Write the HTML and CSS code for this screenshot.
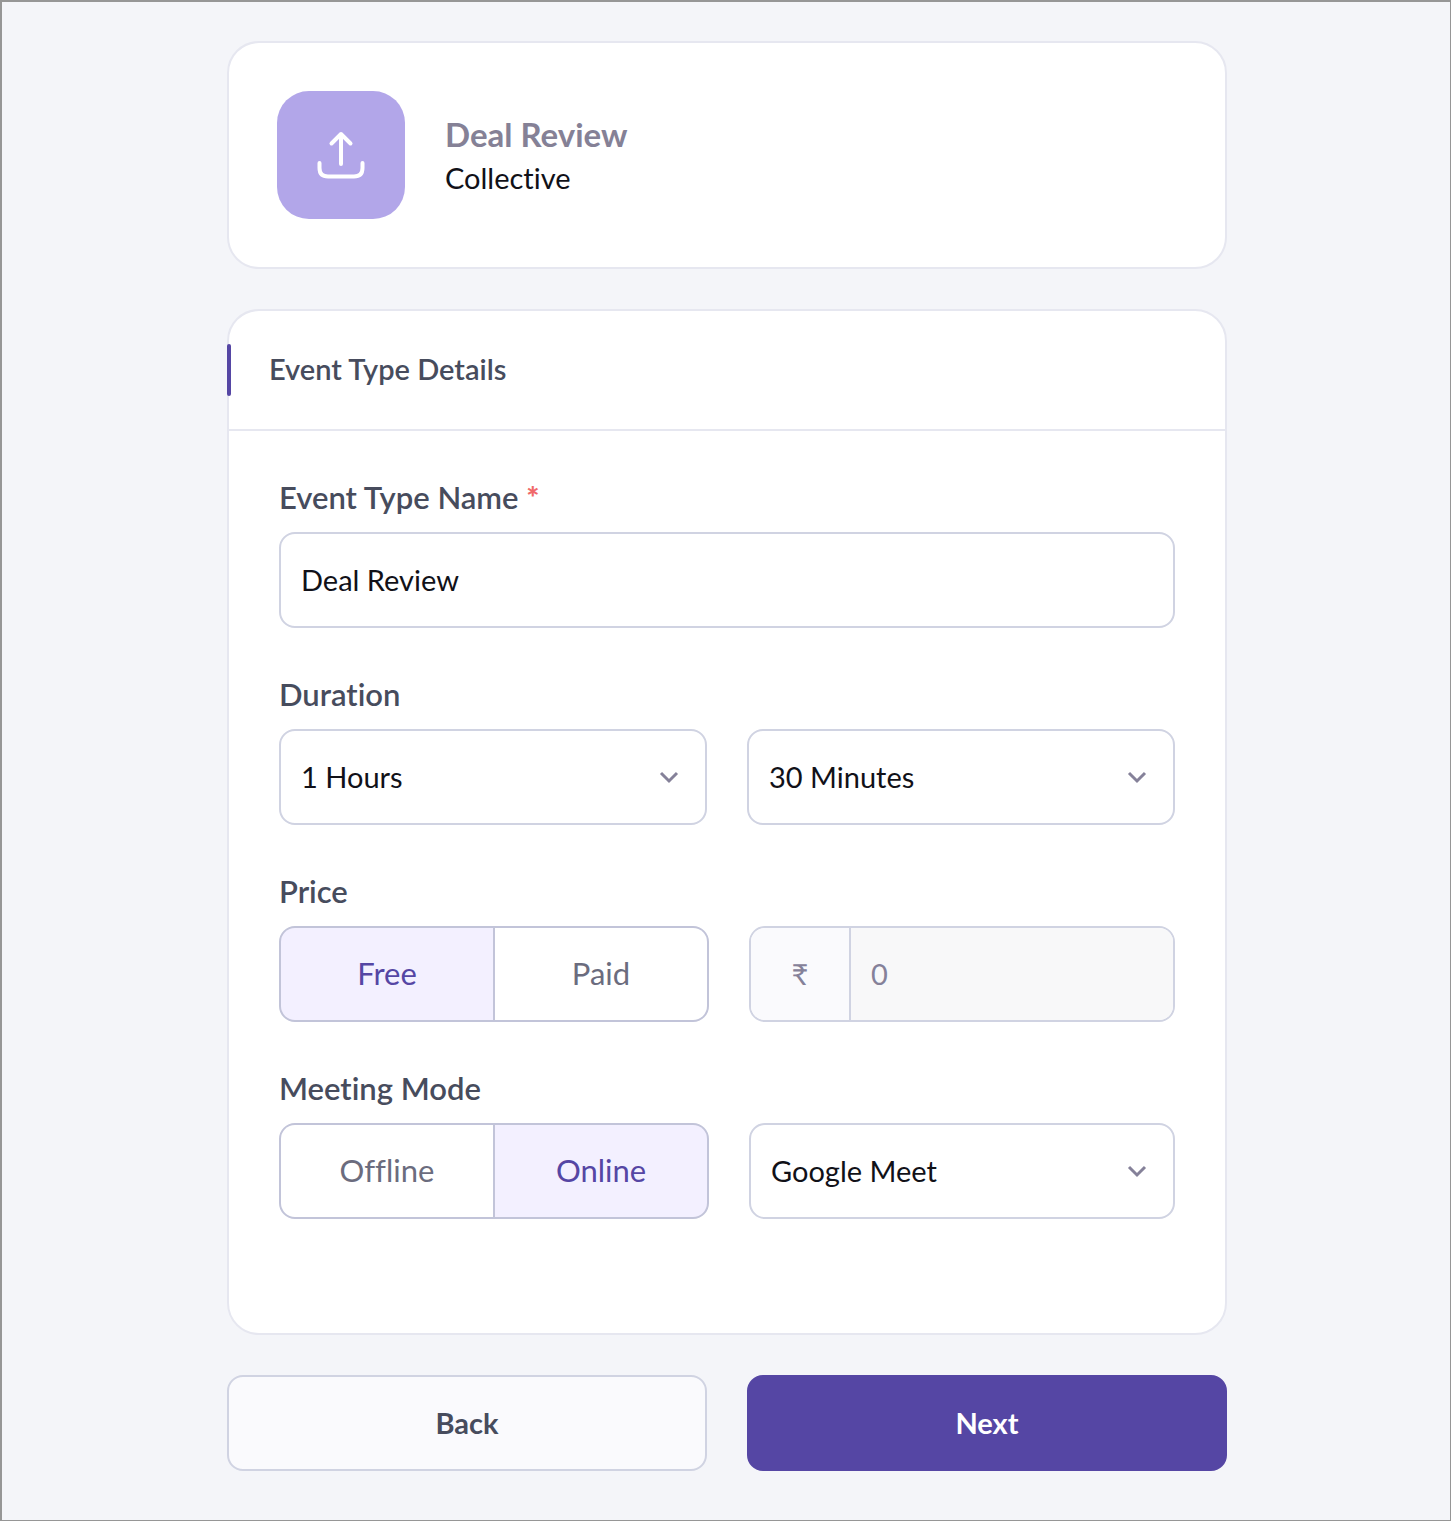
FILE: index.html
```html
<!DOCTYPE html>
<html lang="en">
<head>
    <meta charset="UTF-8">
    <meta name="viewport" content="width=device-width, initial-scale=1.0">
    <title>Event Type Details</title>
    <link rel="stylesheet" href="styles.css">
</head>
<body>
    <main class="page">
        <form class="container">
            <section class="card summary">
                <button type="button" class="upload-btn" aria-label="Upload image">
                    <svg width="48" height="48" viewBox="0 0 48 48" fill="none" stroke="#fff" stroke-width="4" stroke-linecap="round" stroke-linejoin="round" aria-hidden="true">
                        <path d="M24 33V3M14.500 12.500L24 3L33.500 12.500"/>
                        <path d="M2.500 32V37C2.500 43 6 45.500 11 45.500H37C42 45.500 45.500 43 45.500 37V32"/>
                    </svg>
                </button>
                <div class="summary-text">
                    <h1>Deal Review</h1>
                    <p>Collective</p>
                </div>
            </section>

            <section class="card">
                <div class="card-header">
                    <h2>Event Type Details</h2>
                </div>
                <div class="card-body">
                    <div class="form-group">
                        <label class="label" for="name">Event Type Name <span class="required">*</span></label>
                        <input type="text" class="field" id="name" value="Deal Review">
                    </div>

                    <div class="form-group">
                        <label class="label" for="hours">Duration</label>
                        <div class="row">
                            <div class="select">
                                <select class="field" id="hours">
                                    <option>1 Hours</option>
                                </select>
                                <svg class="chevron" width="20" height="14" viewBox="0 0 20 14" aria-hidden="true"><path d="M2 3L10 11L18 3"/></svg>
                            </div>
                            <div class="select">
                                <select class="field" id="minutes" aria-label="Minutes">
                                    <option>30 Minutes</option>
                                </select>
                                <svg class="chevron" width="20" height="14" viewBox="0 0 20 14" aria-hidden="true"><path d="M2 3L10 11L18 3"/></svg>
                            </div>
                        </div>
                    </div>

                    <div class="form-group">
                        <label class="label" for="price">Price</label>
                        <div class="row row-toggle">
                            <div class="toggle">
                                <label><input type="radio" name="priceType" checked><span>Free</span></label>
                                <label><input type="radio" name="priceType"><span>Paid</span></label>
                            </div>
                            <div class="amount">
                                <span class="currency">₹</span>
                                <input type="text" id="price" value="0" disabled>
                            </div>
                        </div>
                    </div>

                    <div class="form-group">
                        <label class="label" for="mode">Meeting Mode</label>
                        <div class="row row-toggle">
                            <div class="toggle">
                                <label><input type="radio" name="meetingMode"><span>Offline</span></label>
                                <label><input type="radio" name="meetingMode" checked><span>Online</span></label>
                            </div>
                            <div class="select">
                                <select class="field" id="mode">
                                    <option>Google Meet</option>
                                </select>
                                <svg class="chevron" width="20" height="14" viewBox="0 0 20 14" aria-hidden="true"><path d="M2 3L10 11L18 3"/></svg>
                            </div>
                        </div>
                    </div>
                </div>
            </section>

            <div class="row">
                <button type="button" class="btn">Back</button>
                <button type="button" class="btn btn-primary">Next</button>
            </div>
        </form>
    </main>
</body>
</html>
```
FILE: styles.css
```css
* {
    box-sizing: border-box;
}
body {
    margin: 0;
    font-family: Lato, sans-serif;
    font-size: 29px;
    font-variant-ligatures: none;
    color: #111118;
}
h1, h2, p {
    margin: 0;
}
input, select, button {
    font: inherit;
    font-variant-ligatures: none;
    color: inherit;
}
.page {
    min-height: 100vh;
    padding: 39px 24px 48px 26px;
    background: #f4f5f9;
    border: solid #969696;
    border-width: 2px 1px 1px 2px;
}
.container {
    display: flex;
    flex-direction: column;
    gap: 40px;
    max-width: 1000px;
    margin: 0 auto;
}
.card {
    background: #fff;
    border: 2px solid #e6e7f0;
    border-radius: 32px;
}
.summary {
    display: flex;
    align-items: center;
    gap: 40px;
    padding: 48px;
}
.upload-btn {
    display: flex;
    align-items: center;
    justify-content: center;
    width: 128px;
    height: 128px;
    padding: 0;
    border: none;
    border-radius: 32px;
    background: #b2a6e9;
    cursor: pointer;
}
.summary-text {
    padding-top: 2px;
    line-height: 44px;
}
.summary-text h1 {
    font-size: 33px;
    font-weight: 700;
    color: #858196;
}
.card-header {
    position: relative;
    padding: 38px 40px 40px;
    border-bottom: 2px solid #e6e7f0;
}
.card-header::before {
    content: "";
    position: absolute;
    left: -2px;
    top: 33px;
    width: 4px;
    height: 52px;
    border-radius: 2px;
    background: #5546a4;
}
.card-header h2 {
    font-size: 29px;
    line-height: 40px;
    font-weight: 600;
    color: #474c5d;
}
.card-body {
    display: flex;
    flex-direction: column;
    gap: 48px;
    padding: 48px 50px 114px;
}
.label {
    display: block;
    margin-bottom: 17px;
    font-size: 31px;
    line-height: 36px;
    font-weight: 600;
    color: #474c5d;
}
.required {
    font-weight: 900;
    color: #f0696a;
}
.row {
    display: grid;
    grid-template-columns: 1fr 1fr;
    gap: 40px;
}
.row-toggle {
    grid-template-columns: 430fr 426fr;
}
.field {
    display: block;
    width: 100%;
    height: 96px;
    padding: 0 20px 2px;
    border: 2px solid #d0d3e2;
    border-radius: 16px;
    background: #fff;
    appearance: none;
}
.select {
    display: grid;
    align-items: center;
}
.select .field, .chevron {
    grid-area: 1 / 1;
}
.chevron {
    justify-self: end;
    margin-right: 28px;
    fill: none;
    stroke: #858199;
    stroke-width: 3;
    pointer-events: none;
}
.toggle {
    display: grid;
    grid-template-columns: 1fr 1fr;
    gap: 2px;
    height: 96px;
    overflow: hidden;
    border: 2px solid #c2c4d9;
    border-radius: 16px;
    background: #c2c4d9;
    font-size: 31px;
    color: #6b6c7e;
}
.toggle label {
    display: grid;
    cursor: pointer;
}
.toggle input {
    grid-area: 1 / 1;
    margin: 0;
    appearance: none;
}
.toggle span {
    grid-area: 1 / 1;
    display: flex;
    align-items: center;
    justify-content: center;
    padding-bottom: 2px;
    background: #fff;
}
.toggle input:checked + span {
    background: #f3f0ff;
    color: #5546a4;
}
.amount {
    display: flex;
    height: 96px;
    overflow: hidden;
    border: 2px solid #d0d3e2;
    border-radius: 16px;
    color: #858199;
}
.currency {
    display: flex;
    flex: none;
    align-items: center;
    justify-content: center;
    width: 100px;
    padding-bottom: 2px;
    border-right: 2px solid #d0d3e2;
    background: #fafafd;
}
.amount input {
    flex: 1;
    min-width: 0;
    padding: 0 20px 2px;
    border: none;
    background: #f8f8f9;
}
.btn {
    height: 96px;
    padding: 0 20px 2px;
    border: 2px solid #d0d3e2;
    border-radius: 16px;
    background: #fafafd;
    color: #474c5d;
    font-weight: 700;
    cursor: pointer;
}
.btn-primary {
    border-color: #5546a4;
    background: #5546a4;
    color: #fff;
}
```
